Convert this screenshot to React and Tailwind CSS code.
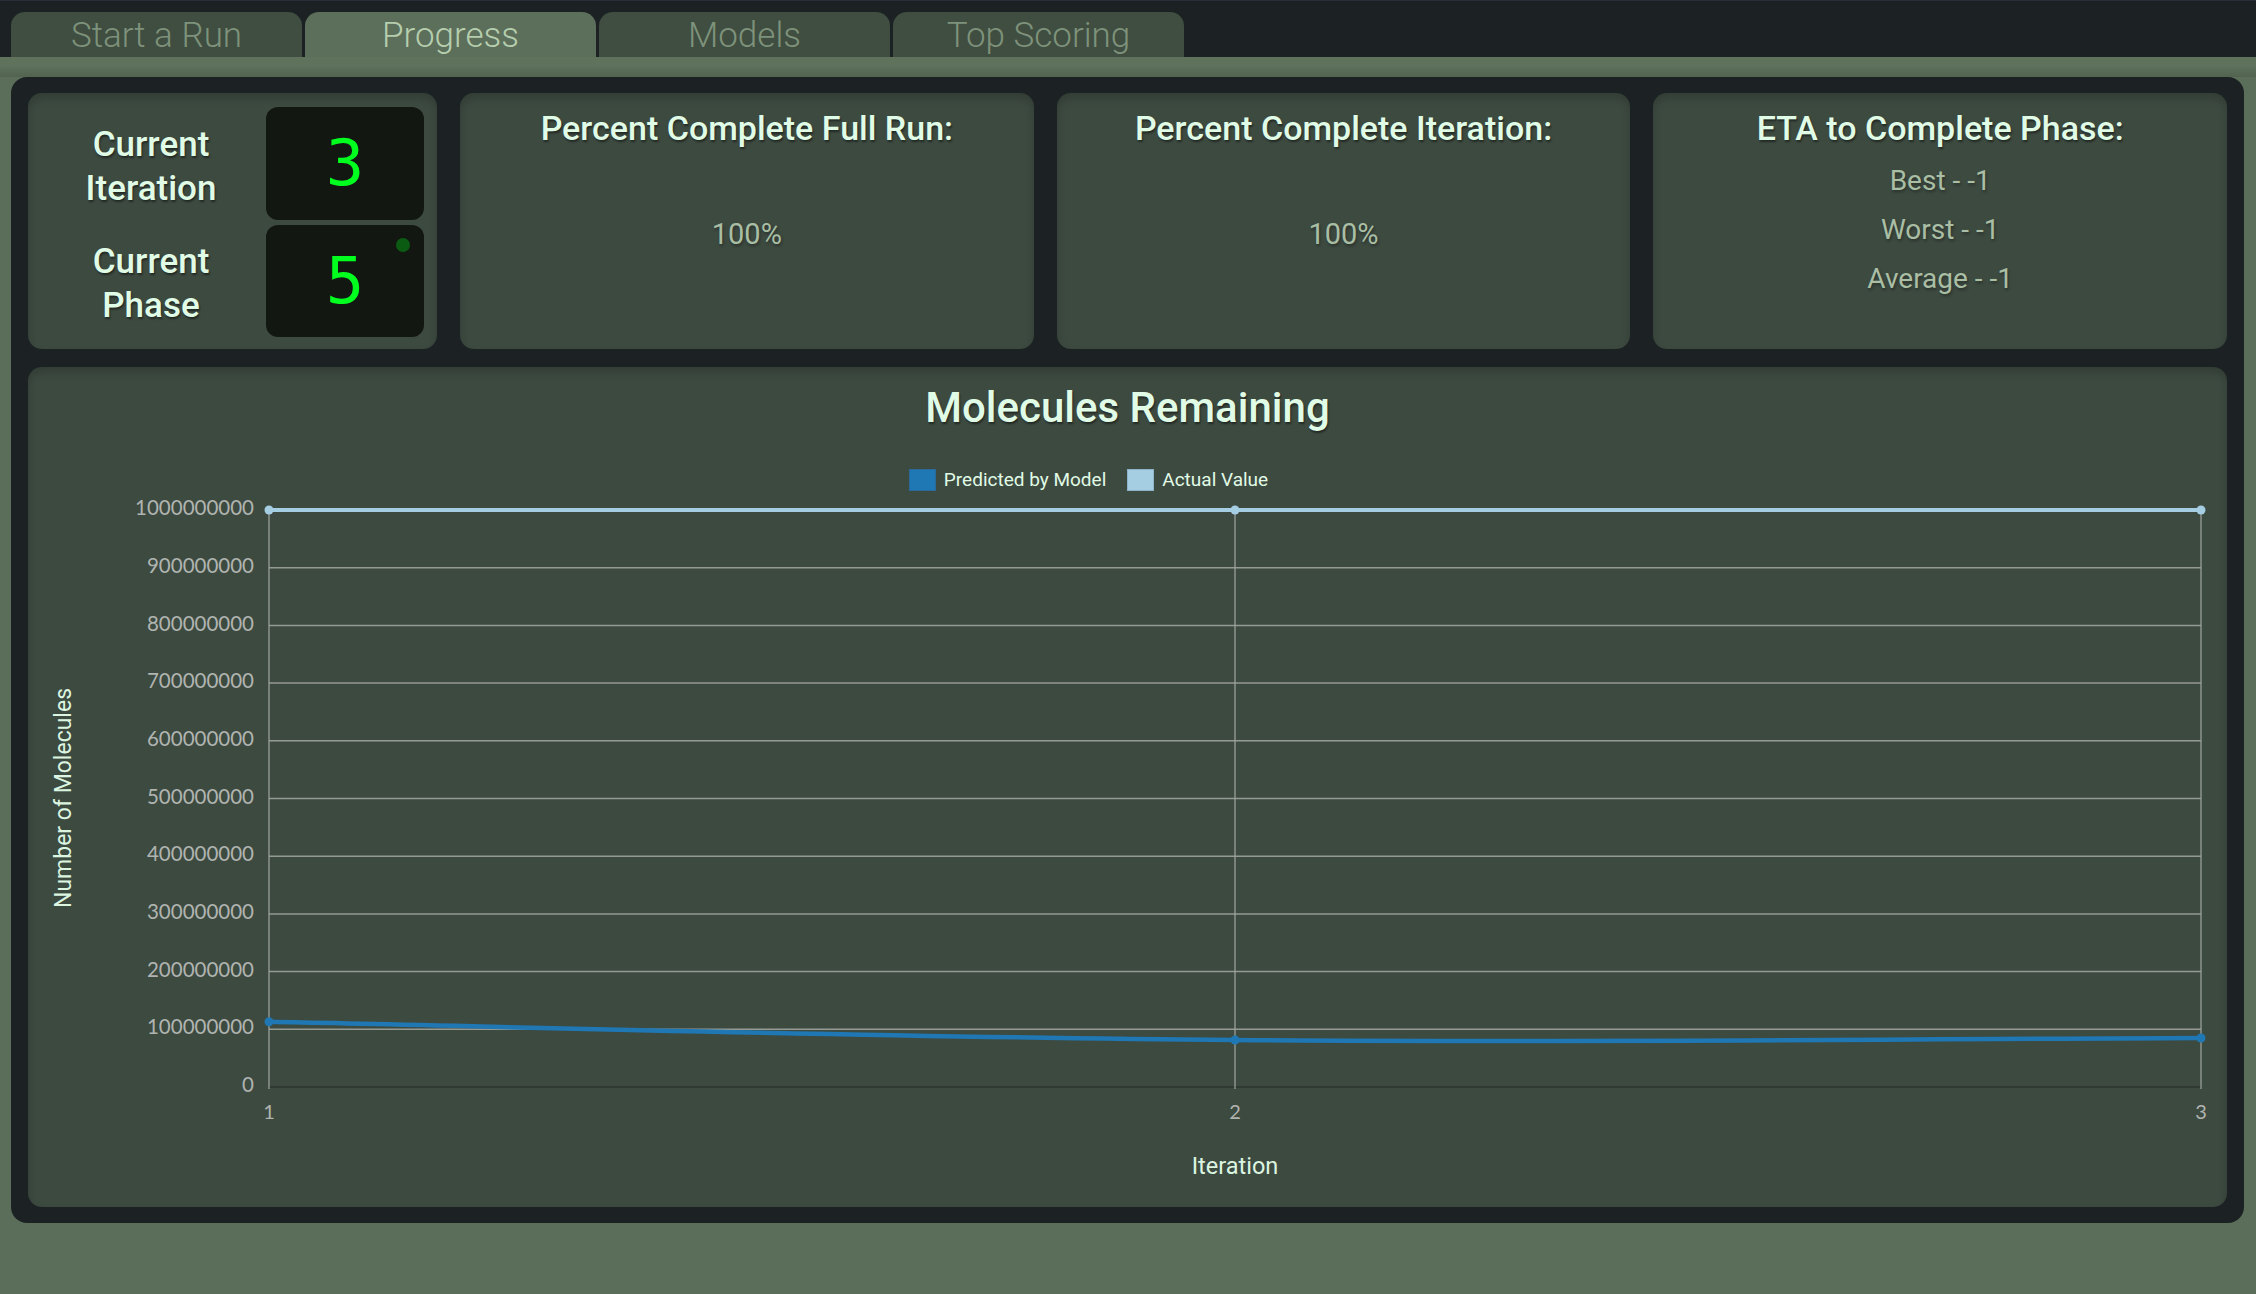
import React from "react";

const tabs = ["Start a Run", "Progress", "Models", "Top Scoring"];
const headFont = { fontFamily: "Roboto, 'Noto Sans', sans-serif" };

// chart geometry (svg coordinates, relative to chart svg origin)
const W = 2199;
const H = 712;
const X0 = 241;
const X1 = 2173;
const YT = 15;
const YB = 592;
const xs = [X0, (X0 + X1) / 2, X1];
const yOf = (v) => YB - (v / 1e9) * (YB - YT);
const predicted = [1.13e8, 0.815e8, 0.85e8];
const actual = [1e9, 1e9, 1e9];

// smooth path through points, like chart.js tension
const smoothPath = (pts, t = 0.4) => {
  let d = `M${pts[0][0]},${pts[0][1]}`;
  for (let i = 0; i < pts.length - 1; i++) {
    const p0 = pts[i - 1] || pts[i];
    const p1 = pts[i];
    const p2 = pts[i + 1];
    const p3 = pts[i + 2] || p2;
    const c1x = p1[0] + ((p2[0] - p0[0]) * t) / 2;
    const c1y = p1[1] + ((p2[1] - p0[1]) * t) / 2;
    const c2x = p2[0] - ((p3[0] - p1[0]) * t) / 2;
    const c2y = p2[1] - ((p3[1] - p1[1]) * t) / 2;
    d += ` C${c1x},${c1y} ${c2x},${c2y} ${p2[0]},${p2[1]}`;
  }
  return d;
};

const Card = ({ className = "", children }) => (
  <div
    className={`bg-[#3d4a40] rounded-[14px] shadow-[inset_0_5px_8px_rgba(0,0,0,0.18)] ${className}`}
  >
    {children}
  </div>
);

const Chart = () => {
  const ticks = [];
  for (let i = 0; i <= 10; i++) ticks.push(i * 1e8);
  const predPts = predicted.map((v, i) => [xs[i], yOf(v)]);
  const actPts = actual.map((v, i) => [xs[i], yOf(v)]);

  return (
    <svg width={W} height={H} viewBox={`0 0 ${W} ${H}`} className="block">
      {/* horizontal grid */}
      {ticks.slice(1).map((t) => (
        <line key={t} x1={X0} x2={X1} y1={yOf(t)} y2={yOf(t)} stroke="#959a95" strokeWidth="1.5" />
      ))}
      <line x1={X0} x2={X1} y1={YB} y2={YB} stroke="#2f3a32" strokeWidth="2" />
      {/* vertical grid */}
      {xs.map((x) => (
        <line key={x} x1={x} x2={x} y1={YT} y2={YB + 2} stroke="#a2a6a2" strokeWidth="1.2" />
      ))}
      {/* y tick labels */}
      {ticks.map((t) => (
        <text
          key={t}
          x={226}
          y={yOf(t)}
          textAnchor="end"
          dominantBaseline="middle"
          fill="#b0b4b0"
          fontSize="20.5"
          fontFamily="Lato, 'Open Sans', sans-serif"
        >
          {t}
        </text>
      ))}
      {/* x tick labels */}
      {xs.map((x, i) => (
        <text
          key={x}
          x={x}
          y={619}
          textAnchor="middle"
          dominantBaseline="middle"
          fill="#b0b4b0"
          fontSize="20"
          fontFamily="Lato, 'Open Sans', sans-serif"
        >
          {i + 1}
        </text>
      ))}
      {/* axis titles */}
      <text
        x={(X0 + X1) / 2}
        y={673}
        textAnchor="middle"
        dominantBaseline="middle"
        fill="#dcf5e0"
        fontSize="23.5"
        fontFamily="Roboto, sans-serif"
      >
        Iteration
      </text>
      <text
        x={37}
        y={303}
        textAnchor="middle"
        dominantBaseline="middle"
        fill="#dcf5e0"
        fontSize="23"
        fontFamily="Roboto, sans-serif"
        transform="rotate(-90 37 303)"
      >
        Number of Molecules
      </text>
      {/* actual value */}
      <path d={smoothPath(actPts)} fill="none" stroke="#a6cee3" strokeWidth="4" />
      {actPts.map(([x, y]) => (
        <circle key={x} cx={x} cy={y} r="4.5" fill="#a6cee3" />
      ))}
      {/* predicted */}
      <path d={smoothPath(predPts)} fill="none" stroke="#1f77b4" strokeWidth="4.5" />
      {predPts.map(([x, y]) => (
        <circle key={x} cx={x} cy={y} r="4.5" fill="#1f77b4" />
      ))}
    </svg>
  );
};

export default function App() {
  return (
    <div className="w-[2256px] h-[1294px] bg-[#5b6e5a] overflow-hidden" style={headFont}>
      {/* tab bar */}
      <div className="h-[57px] bg-[#1c2224] border-t border-[#2b2d38] flex items-end pl-[11px] gap-[3px]">
        {tabs.map((t) => (
          <div
            key={t}
            className={`w-[291px] h-[45px] pt-[3px] rounded-t-[14px] flex items-center justify-center text-[35px] font-light ${
              t === "Progress" ? "bg-[#5c6f5b] text-[#b6ceae]" : "bg-[#3f4e40] text-[#7e927b]"
            }`}
          >
            {t}
          </div>
        ))}
      </div>
      <div className="h-[20px] bg-gradient-to-b from-[#5e725c] from-40% to-[#52644f]" />

      {/* main panel */}
      <div className="mx-[11px] w-[2233px] h-[1146px] bg-[#1c2224] rounded-[16px] px-[17px] pt-[16px] pb-[16px] flex flex-col gap-[18px]">
        <div className="flex gap-[23px] h-[256px]">
          <Card className="w-[409px] grid grid-cols-[1fr_158px] gap-y-[5px] pl-[8px] pr-[13px] pt-[14px] pb-[12px]">
            <div className="pt-[7px] flex items-center justify-center text-center text-[35px] leading-[44px] font-medium text-[#e0fbe6] [text-shadow:1px_2px_2px_rgba(0,0,0,0.45)]">
              Current
              <br />
              Iteration
            </div>
            <div className="bg-[#121712] rounded-[12px] flex items-center justify-center text-[64px] text-[#00ff1e]" style={{ fontFamily: "'DejaVu Sans Mono', monospace" }}>
              3
            </div>
            <div className="pt-[7px] flex items-center justify-center text-center text-[35px] leading-[44px] font-medium text-[#e0fbe6] [text-shadow:1px_2px_2px_rgba(0,0,0,0.45)]">
              Current
              <br />
              Phase
            </div>
            <div className="relative bg-[#121712] rounded-[12px] flex items-center justify-center text-[64px] text-[#00ff1e]" style={{ fontFamily: "'DejaVu Sans Mono', monospace" }}>
              5
              <span className="absolute right-[14px] top-[13px] w-[14px] h-[14px] rounded-full bg-[#0b5c12]" />
            </div>
          </Card>

          {["Percent Complete Full Run:", "Percent Complete Iteration:"].map((title) => (
            <Card key={title} className="flex-1 flex flex-col items-center pt-[15px]">
              <div className="text-[34px] leading-[41px] font-medium text-[#e0fbe6] [text-shadow:1px_2px_2px_rgba(0,0,0,0.45)]">
                {title}
              </div>
              <div className="mt-[67px] text-[29px] leading-[36px] text-[#a9bea4] [text-shadow:1px_2px_3px_rgba(0,0,0,0.35)]">
                100%
              </div>
            </Card>
          ))}

          <Card className="flex-1 flex flex-col items-center pt-[15px]">
            <div className="text-[34px] leading-[41px] font-medium text-[#e0fbe6] [text-shadow:1px_2px_2px_rgba(0,0,0,0.45)]">
              ETA to Complete Phase:
            </div>
            <div className="mt-[7px] flex flex-col items-center text-[28px] leading-[49px] text-[#a9bea4] [text-shadow:1px_2px_3px_rgba(0,0,0,0.35)]">
              <div>Best - -1</div>
              <div>Worst - -1</div>
              <div>Average - -1</div>
            </div>
          </Card>
        </div>

        <Card className="h-[840px] flex flex-col items-center pt-[15px]">
          <div className="text-[42px] leading-[52px] font-medium text-[#e0fbe6] [text-shadow:1px_2px_2px_rgba(0,0,0,0.45)]">
            Molecules Remaining
          </div>
          <div className="mt-[34px] mr-[78px] h-[24px] flex items-center gap-[21px] text-[19px] text-[#e0fbe6]">
            <div className="flex items-center gap-[8px]">
              <span className="w-[27px] h-[22px] bg-[#1f77b4] border border-[#2a6a9a]" />
              Predicted by Model
            </div>
            <div className="flex items-center gap-[8px]">
              <span className="w-[27px] h-[22px] bg-[#a6cee3] border border-[#8fb3c8]" />
              Actual Value
            </div>
          </div>
          <div className="mt-[3px] self-stretch">
            <Chart />
          </div>
        </Card>
      </div>
    </div>
  );
}
